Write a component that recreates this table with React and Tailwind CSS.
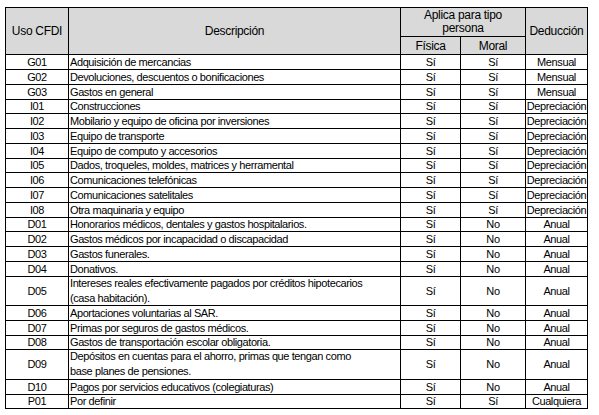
const rows = [
  ['G01', 'Adquisición de mercancias', 'Sí', 'Sí', 'Mensual'],
  ['G02', 'Devoluciones, descuentos o bonificaciones', 'Sí', 'Sí', 'Mensual'],
  ['G03', 'Gastos en general', 'Sí', 'Sí', 'Mensual'],
  ['I01', 'Construcciones', 'Sí', 'Sí', 'Depreciación'],
  ['I02', 'Mobilario y equipo de oficina por inversiones', 'Sí', 'Sí', 'Depreciación'],
  ['I03', 'Equipo de transporte', 'Sí', 'Sí', 'Depreciación'],
  ['I04', 'Equipo de computo y accesorios', 'Sí', 'Sí', 'Depreciación'],
  ['I05', 'Dados, troqueles, moldes, matrices y herramental', 'Sí', 'Sí', 'Depreciación'],
  ['I06', 'Comunicaciones telefónicas', 'Sí', 'Sí', 'Depreciación'],
  ['I07', 'Comunicaciones satelitales', 'Sí', 'Sí', 'Depreciación'],
  ['I08', 'Otra maquinaria y equipo', 'Sí', 'Sí', 'Depreciación'],
  ['D01', 'Honorarios médicos, dentales y gastos hospitalarios.', 'Sí', 'No', 'Anual'],
  ['D02', 'Gastos médicos por incapacidad o discapacidad', 'Sí', 'No', 'Anual'],
  ['D03', 'Gastos funerales.', 'Sí', 'No', 'Anual'],
  ['D04', 'Donativos.', 'Sí', 'No', 'Anual'],
  ['D05', ['Intereses reales efectivamente pagados por créditos hipotecarios', '(casa habitación).'], 'Sí', 'No', 'Anual'],
  ['D06', 'Aportaciones voluntarias al SAR.', 'Sí', 'No', 'Anual'],
  ['D07', 'Primas por seguros de gastos médicos.', 'Sí', 'No', 'Anual'],
  ['D08', 'Gastos de transportación escolar obligatoria.', 'Sí', 'No', 'Anual'],
  ['D09', ['Depósitos en cuentas para el ahorro, primas que tengan como', 'base planes de pensiones.'], 'Sí', 'No', 'Anual'],
  ['D10', 'Pagos por servicios educativos (colegiaturas)', 'Sí', 'No', 'Anual'],
  ['P01', 'Por definir', 'Sí', 'Sí', 'Cualquiera'],
];

export default function App() {
  return (
    <div className="w-[599px] h-[415px] bg-white pt-[7px] pl-[5px] text-black text-[11px] leading-[14px] tracking-[-0.4px]" style={{ fontFamily: '"Liberation Sans", Arial, sans-serif' }}>
      <div className="w-[583px] border-t border-black">
        {/* header */}
        <div className="grid grid-cols-[64px_332px_60px_65px_62px] grid-rows-[29px_18px] bg-[#d9d9d9] text-[12px] tracking-[-0.3px]">
          <div className="row-span-2 flex items-center justify-center border-l border-r border-b border-black">Uso CFDI</div>
          <div className="row-span-2 flex items-center justify-center border-r border-b border-black">Descripción</div>
          <div className="col-span-2 flex items-center justify-center text-center border-r border-b border-black leading-[13px]">
            Aplica para tipo<br />persona
          </div>
          <div className="row-span-2 flex items-center justify-center border-r border-b border-black">Deducción</div>
          <div className="flex items-center justify-center border-r border-b border-black">Física</div>
          <div className="flex items-center justify-center border-r border-b border-black">Moral</div>
        </div>
        {rows.map(([code, desc, fis, mor, ded]) => {
          const tall = Array.isArray(desc);
          return (
            <div key={code} className={`grid grid-cols-[64px_332px_60px_65px_62px] ${tall ? 'h-[29.5px]' : 'h-[14.75px]'}`}>
              <div className="flex items-center justify-center border-l border-r border-b border-black">{code}</div>
              <div className="flex items-center pl-[1px] border-r border-b border-black whitespace-nowrap overflow-hidden">
                {tall ? (
                  <span className="leading-[15px]">{desc[0]}<br />{desc[1]}</span>
                ) : (
                  <span>{desc}</span>
                )}
              </div>
              <div className="flex items-center justify-center border-r border-b border-black">{fis}</div>
              <div className="flex items-center justify-center border-r border-b border-black">{mor}</div>
              <div className="flex items-center justify-center border-r border-b border-black">{ded}</div>
            </div>
          );
        })}
      </div>
    </div>
  );
}
